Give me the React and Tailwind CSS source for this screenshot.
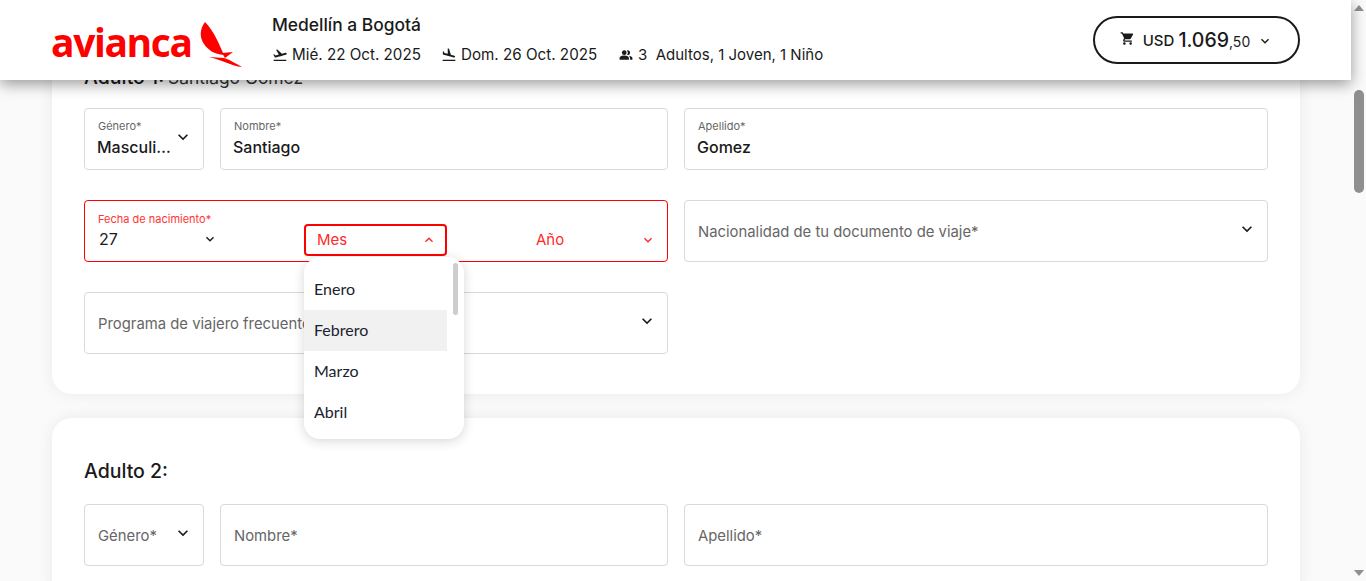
import { MdFlightTakeoff, MdFlightLand, MdShoppingCart, MdKeyboardArrowDown, MdKeyboardArrowUp, MdPeopleAlt } from "react-icons/md";

const Chevron = ({ className = "" }) => <MdKeyboardArrowDown className={`w-5 h-5 shrink-0 ${className}`} />;

const Field = ({ label, value, className = "", arrow = false }) => (
  <div className={`relative h-[62px] rounded border border-[#d9d9d9] bg-white pl-[12px] pr-[10px] flex items-center justify-between ${className}`}>
    {value ? (
      <div className="flex flex-col min-w-0">
        <span className="text-[11px] leading-[14px] text-[#666] pl-[1px] -mt-[1px]">{label}</span>
        <span className="text-[16px] leading-[22px] mt-[3px] font-medium text-[#1a1a1a] truncate">{value}</span>
      </div>
    ) : (
      <span className="text-[14.85px] text-[#666] pl-[1px] pt-[3px]">{label}</span>
    )}
    {arrow && <Chevron className="text-[#1a1a1a] -mt-[5px]" />}
  </div>
);

const AdultRow = ({ genero, nombre, apellido }) => (
  <div className="grid grid-cols-2 gap-4">
    <div className="flex gap-4">
      <Field label="Género*" value={genero} arrow className="w-[120px] shrink-0" />
      <Field label="Nombre*" value={nombre} className="flex-1" />
    </div>
    <Field label="Apellido*" value={apellido} />
  </div>
);

const months = ["Enero", "Febrero", "Marzo", "Abril"];

export default function App() {
  return (
    <div className="relative h-screen overflow-hidden flex bg-[#fafafa] font-['Inter',sans-serif] text-[#1a1a1a]">
      <div className="relative flex-1 min-w-0">
        {/* Header */}
        <header className="absolute top-0 inset-x-0 z-20 h-20 bg-white shadow-[0_4px_14px_rgba(0,0,0,0.4)] flex items-center pl-[52px] pr-[51px]">
          <div className="flex items-center w-[220px] shrink-0">
            <span className="w-[143px] shrink-0 -ml-[1px] mr-[1px] font-['Open_Sans',sans-serif] font-bold text-[39px] leading-none tracking-[-1.4px] text-[#ff0000] mt-[1px] pt-[1px]">avianca</span>
            <svg viewBox="195 15 55 60" className="w-[55px] h-[60px] mt-[10px]" fill="#ff0000">
              <path d="M205 22C199 30 200 38 204 44C208 50 214 54 224 55C219 44 214 31 205 22Z" />
              <path d="M222 53L233 52L225 58Z" />
              <path d="M209 57L224 58C231 60 236 64 242 67C232 66 222 60 209 57Z" />
            </svg>
          </div>
          <div className="flex flex-col">
            <div className="text-[17.4px] leading-5 font-medium -mt-[1px] mb-[9px]">Medellín a Bogotá</div>
            <div className="flex items-center text-[15.2px] leading-5 pt-[1px]">
              <MdFlightTakeoff className="w-4 h-4 mr-[4px]" />
              <span className="w-[149px]">Mié. 22 Oct. 2025</span>
              <MdFlightLand className="w-4 h-4 mr-[4px]" />
              <span className="w-[158px]">Dom. 26 Oct. 2025</span>
              <MdPeopleAlt className="w-[14px] h-[14px] mr-[5px]" />
              <span className="text-[15px]">3&nbsp; Adultos, 1 Joven, 1 Niño</span>
            </div>
          </div>
          <button className="ml-auto w-[207px] h-12 rounded-full border-2 border-[#1a1a1a] flex items-center justify-center pt-[2px]">
            <MdShoppingCart className="w-[15px] h-[15px] mr-[8px] -mt-[6px]" />
            <span className="text-[15px] font-medium">USD</span>
            <span className="text-[19.5px] font-medium ml-1">1.069</span>
            <span className="text-[14px]">,50</span>
            <MdKeyboardArrowDown className="w-4 h-4 ml-[7px]" />
          </button>
        </header>

        {/* Form */}
        <main className="pt-[22px] pl-[52px] pr-[51px] flex flex-col gap-6">
          <section className="bg-white rounded-[20px] shadow-[0_0_16px_rgba(0,0,0,0.07)] px-8 pt-8 pb-10">
            <h2 className="h-[42px] mb-3 flex items-center pt-[6px] text-[19.5px] font-medium">
              Adulto 1:<span className="text-[17.4px] font-normal ml-1 text-[#333]">Santiago Gomez</span>
            </h2>
            <AdultRow genero="Masculino" nombre="Santiago" apellido="Gomez" />

            <div className="grid grid-cols-2 gap-4 mt-[30px]">
              <div className="relative h-[62px] rounded border border-[#ff0000] flex items-start pl-[13px] pr-[10px] text-[#ff2a2a]">
                <div className="w-[120px] pt-[11px] shrink-0">
                  <div className="text-[11px] leading-[14px] whitespace-nowrap text-[#f33]">Fecha de nacimiento*</div>
                  <div className="flex items-center justify-between mt-[2px] text-[#1a1a1a]">
                    <span className="text-[16px] leading-[22px] pl-[1px]">27</span>
                    <MdKeyboardArrowDown className="w-4 h-4" />
                  </div>
                </div>
                <div className="relative ml-[86px] mt-[23px] w-[143px] shrink-0 h-[32px] rounded border-2 border-[#ff0000] flex items-center justify-between pl-[11px] pr-[8px] text-[15px]">
                  <span>Mes</span>
                  <MdKeyboardArrowUp className="w-4 h-4" />
                </div>
                <div className="flex-1 mt-[23px] h-[32px] flex items-center justify-between pl-[89px] pr-[1px] text-[15px]">
                  <span>Año</span>
                  <MdKeyboardArrowDown className="w-4 h-4" />
                </div>

                {/* Open month list */}
                <div className="absolute left-[219px] top-[56px] z-10 w-[160px] h-[182px] rounded-2xl bg-white shadow-[0_2px_12px_rgba(0,0,0,0.16)] overflow-hidden pt-[12px]">
                  {months.map((m) => (
                    <div
                      key={m}
                      className={`w-[143px] h-[41px] flex items-center pl-[10px] pb-[2px] font-['Lato',sans-serif] text-[16px] text-[#1a2230] ${m === "Febrero" ? "bg-[#f1f1f1]" : ""}`}
                    >
                      {m}
                    </div>
                  ))}
                  <div className="absolute top-[6px] right-[6px] w-[5px] h-[52px] rounded bg-[#cdcdcd]" />
                </div>
              </div>
              <Field label="Nacionalidad de tu documento de viaje*" arrow />
            </div>

            <div className="grid grid-cols-2 gap-4 mt-[30px]">
              <Field label="Programa de viajero frecuente" arrow />
            </div>
          </section>

          <section className="bg-white rounded-[20px] shadow-[0_0_16px_rgba(0,0,0,0.07)] px-8 pt-8 pb-10">
            <h2 className="h-[42px] mb-3 flex items-center pt-[1px] text-[19.5px] font-medium">Adulto 2:</h2>
            <AdultRow />
          </section>
        </main>
      </div>

      {/* Scrollbar */}
      <div className="relative w-[15px] shrink-0 bg-[#fafafa]">
        <div className="absolute top-[5px] left-[3px] w-0 h-0 border-x-[5px] border-x-transparent border-b-[6px] border-b-[#8f8f8f]" />
        <div className="absolute top-[90px] left-[3px] w-[10px] h-[103px] rounded-full bg-[#8f8f8f]" />
        <div className="absolute bottom-[5px] left-[3px] w-0 h-0 border-x-[5px] border-x-transparent border-t-[6px] border-t-[#8f8f8f]" />
      </div>
    </div>
  );
}
